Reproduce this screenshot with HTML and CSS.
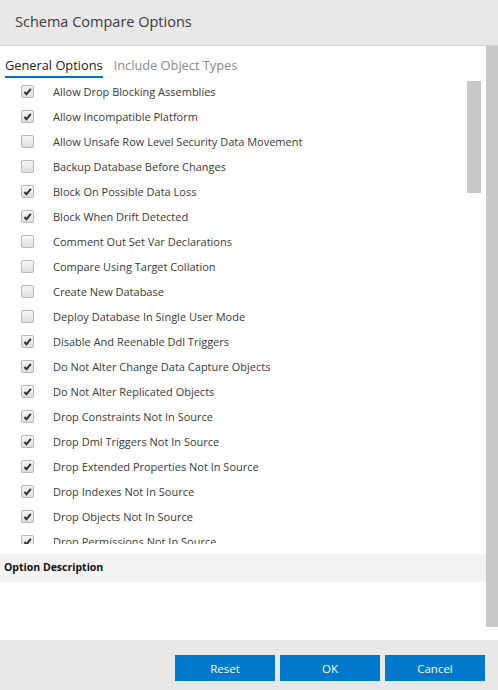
FILE: index.html
```html
<!DOCTYPE html>
<html lang="en-US"><head>
<meta charset="utf-8">
<meta name="viewport" content="width=device-width, initial-scale=1.0">
<title>Schema Compare Options</title>
<link rel="stylesheet" href="styles.css">
</head><body>

<div class="dialog">
<div class="header">Schema Compare Options</div>

<div class="main">
	<div class="pane">
		<div class="tabs">
			<span class="tab active">General Options</span>
			<span class="tab">Include Object Types</span>
		</div>
		<div class="list">
			<div class="row"><span class="box on"></span>Allow Drop Blocking Assemblies</div>
			<div class="row"><span class="box on"></span>Allow Incompatible Platform</div>
			<div class="row"><span class="box"></span>Allow Unsafe Row Level Security Data Movement</div>
			<div class="row"><span class="box"></span>Backup Database Before Changes</div>
			<div class="row"><span class="box on"></span>Block On Possible Data Loss</div>
			<div class="row"><span class="box on"></span>Block When Drift Detected</div>
			<div class="row"><span class="box"></span>Comment Out Set Var Declarations</div>
			<div class="row"><span class="box"></span>Compare Using Target Collation</div>
			<div class="row"><span class="box"></span>Create New Database</div>
			<div class="row"><span class="box"></span>Deploy Database In Single User Mode</div>
			<div class="row"><span class="box on"></span>Disable And Reenable Ddl Triggers</div>
			<div class="row"><span class="box on"></span>Do Not Alter Change Data Capture Objects</div>
			<div class="row"><span class="box on"></span>Do Not Alter Replicated Objects</div>
			<div class="row"><span class="box on"></span>Drop Constraints Not In Source</div>
			<div class="row"><span class="box on"></span>Drop Dml Triggers Not In Source</div>
			<div class="row"><span class="box on"></span>Drop Extended Properties Not In Source</div>
			<div class="row"><span class="box on"></span>Drop Indexes Not In Source</div>
			<div class="row"><span class="box on"></span>Drop Objects Not In Source</div>
			<div class="row"><span class="box on"></span>Drop Permissions Not In Source</div>
			<div class="thumb"></div>
		</div>
		<div class="desc-title">Option Description</div>
		<div class="desc-body"></div>
	</div>
	<div class="track"></div>
</div>

<div class="footer">
	<button class="btn">Reset</button>
	<button class="btn">OK</button>
	<button class="btn">Cancel</button>
</div>
</div>

</body></html>
```

FILE: styles.css
```css
html, body {
	margin : 0 ;
	padding : 0 ;
	background : #ffffff ;
	}
.dialog {
	width : 498px ;
	height : 690px ;
	display : flex ;
	flex-direction : column ;
	font-family : "Open Sans", "Noto Sans", sans-serif ;
	color : #333333 ;
	}
.header {
	height : 46px ;
	flex : none ;
	box-sizing : border-box ;
	background : #e8e8e9 ;
	border-bottom : 1px solid #d2d2d2 ;
	padding : 12px 0 0 15px ;
	font-size : 14.5px ;
	font-weight : 500 ;
	color : #3b3b3b ;
	}
.main {
	flex : 1 ;
	display : flex ;
	min-height : 0 ;
	}
.pane {
	flex : 1 ;
	display : flex ;
	flex-direction : column ;
	min-width : 0 ;
	}
.track {
	width : 12px ;
	flex : none ;
	background : #c8c8c8 ;
	margin-bottom : 13px ;
	}
.tabs {
	height : 33px ;
	flex : none ;
	box-sizing : border-box ;
	padding : 10px 0 0 5px ;
	display : flex ;
	gap : 11px ;
	font-size : 12.8px ;
	}
.tab {
	color : #8a8a8a ;
	height : 22px ;
	box-sizing : border-box ;
	}
.tab.active {
	color : #222222 ;
	border-bottom : 2px solid #0a6fc2 ;
	}
.list {
	height : 465px ;
	flex : none ;
	position : relative ;
	overflow : hidden ;
	}
.row {
	height : 25px ;
	display : flex ;
	align-items : center ;
	font-size : 11px ;
	color : #3a3a3a ;
	white-space : nowrap ;
	}
.box {
	width : 11px ;
	height : 11px ;
	margin : 0 19px 0 21px ;
	border : 1px solid #b8b8b8 ;
	border-radius : 2px ;
	background : linear-gradient( #f6f6f6, #dedede ) ;
	flex : none ;
	}
.box.on {
	background-image : url("data:image/svg+xml,%3Csvg xmlns='http://www.w3.org/2000/svg' viewBox='0 0 11 11'%3E%3Cpath d='M2.5 6 L4.5 8.3 L8.8 2.8' fill='none' stroke='%23303030' stroke-width='2'/%3E%3C/svg%3E"), linear-gradient( #f6f6f6, #dedede ) ;
	}
.thumb {
	position : absolute ;
	top : 2px ;
	right : 5px ;
	width : 14px ;
	height : 112px ;
	background : #c8c8c8 ;
	}
.desc-title {
	margin-top : 10px ;
	height : 28px ;
	flex : none ;
	box-sizing : border-box ;
	background : #f3f3f4 ;
	padding : 6px 0 0 4px ;
	font-size : 10.5px ;
	font-weight : 700 ;
	color : #111111 ;
	}
.desc-body {
	flex : 1 ;
	}
.footer {
	height : 50px ;
	flex : none ;
	background : #e8e8e9 ;
	display : flex ;
	justify-content : flex-end ;
	align-items : flex-start ;
	gap : 5px ;
	padding : 15px 13px 0 0 ;
	box-sizing : border-box ;
	}
.btn {
	width : 100px ;
	height : 26px ;
	border : none ;
	background : #0078cc ;
	color : #ffffff ;
	font-family : "Open Sans", "Noto Sans", sans-serif ;
	font-size : 11.5px ;
	padding : 0 ;
	}
```
